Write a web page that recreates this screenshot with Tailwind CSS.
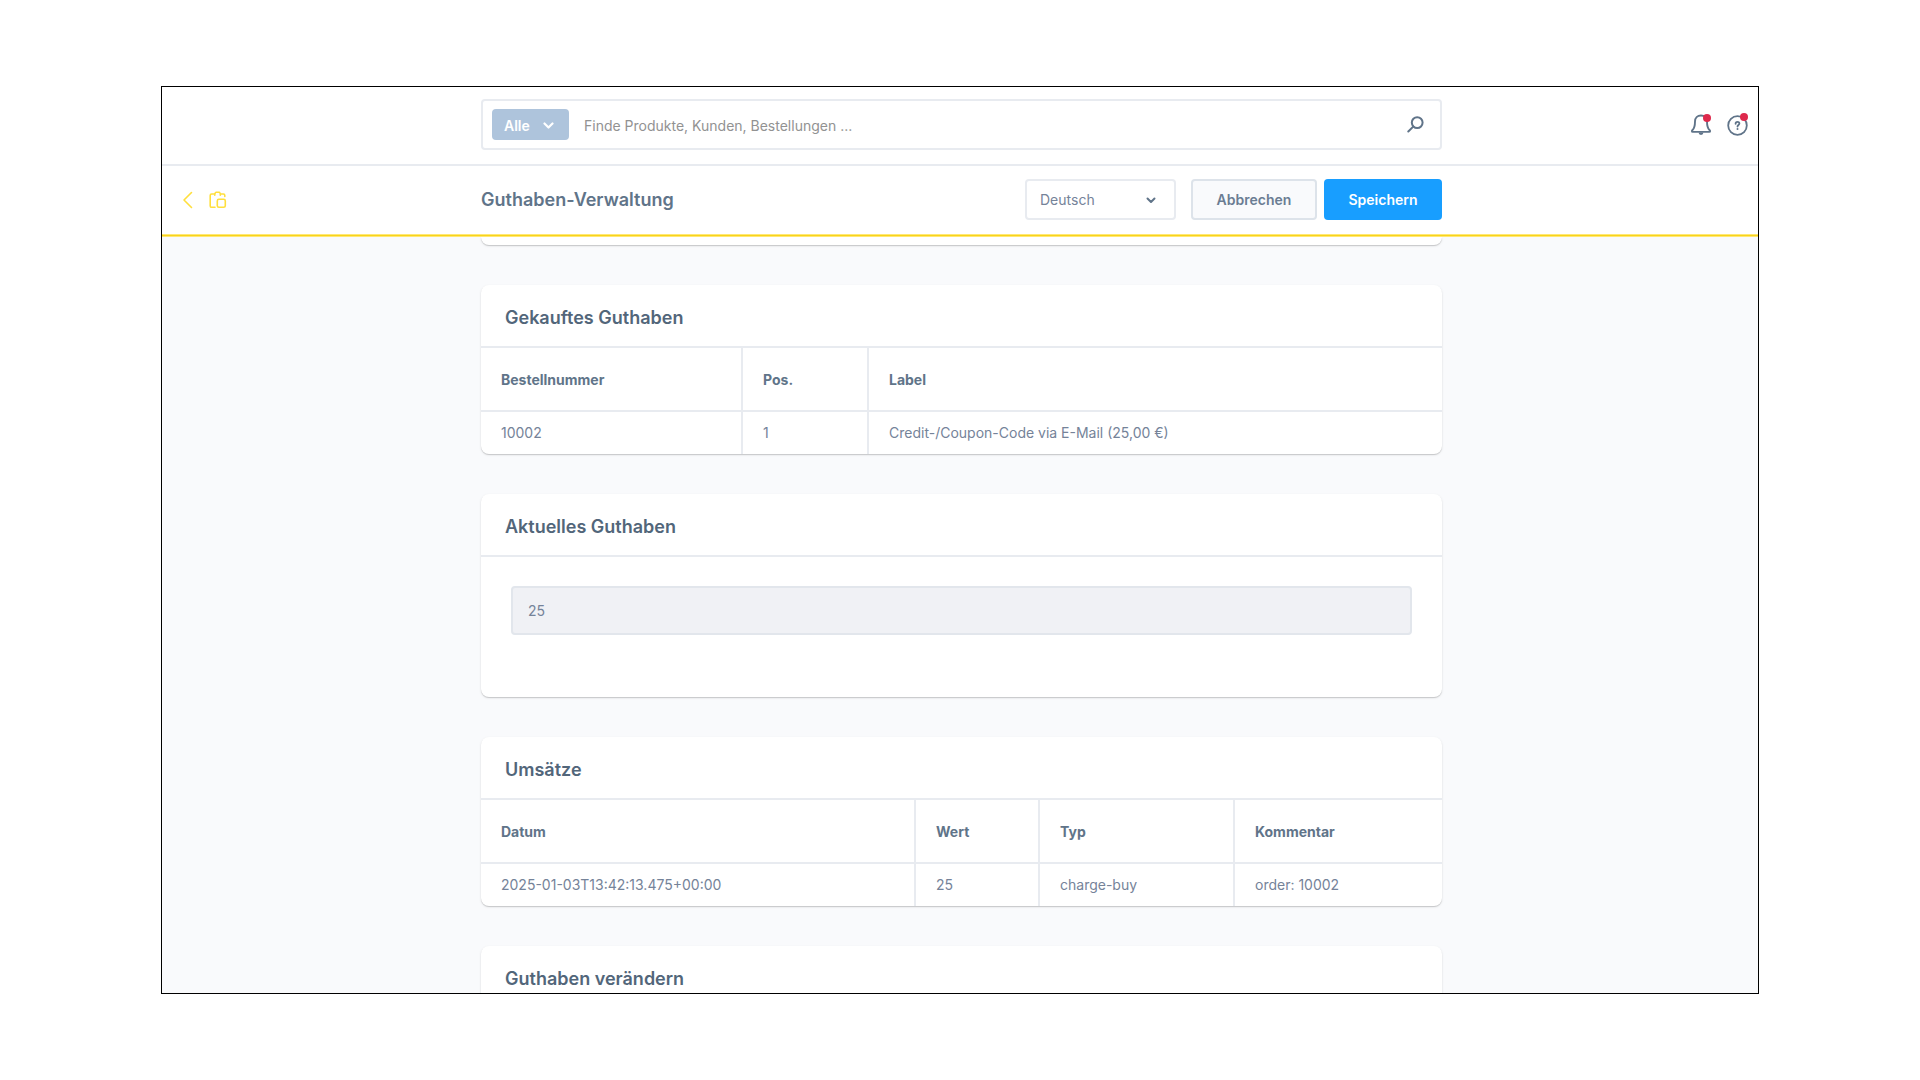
<!DOCTYPE html>
<html lang="de">
<head>
<meta charset="utf-8">
<title>Guthaben-Verwaltung</title>
<script src="https://cdn.jsdelivr.net/npm/@tailwindcss/browser@4"></script>
</head>
<body class="bg-white font-['Inter',sans-serif] text-[14px] text-[#758399]">
<div class="flex h-screen px-[161px] py-[86px]">
<div class="flex min-w-0 flex-1 flex-col overflow-hidden border border-black bg-[#f9fafc]">

  <header class="grid shrink-0 grid-cols-[319fr_961fr_316fr] border-b-2 border-[#e8ebf0] bg-white pt-3 pb-[14px]">
    <form class="col-start-2 flex h-[51px] items-center rounded-[4px] border-2 border-[#e8ebf0] pr-4 pl-[9px]">
      <button type="button" class="flex h-[31px] w-[77px] items-center justify-between rounded-[4px] bg-[#aec4dc] pt-px pr-[15px] pl-3 font-semibold text-white">
        Alle
        <svg class="h-[7px] w-[11px]" viewBox="0 0 11 7" fill="none" stroke="currentColor" stroke-width="2.2" stroke-linecap="round" stroke-linejoin="round"><path d="M1.500 1.500l4 4 4-4"/></svg>
      </button>
      <input type="search" aria-label="Suche" placeholder="Finde Produkte, Kunden, Bestellungen ..." class="ml-[15px] h-full min-w-0 flex-1 pt-[2px] outline-none placeholder:text-[#929292]">
      <button type="submit" aria-label="Suchen" class="text-[#607489]">
        <svg class="h-[17px] w-[17px]" viewBox="0 0 17 17" fill="none" stroke="currentColor" stroke-width="2" stroke-linecap="round"><circle cx="10.200" cy="6.600" r="5.400"/><path d="M6.200 10.600L1.300 15.500"/></svg>
      </button>
    </form>
    <div class="flex items-center justify-end gap-3 pr-[9px] text-[#607489]">
      <button type="button" aria-label="Benachrichtigungen" class="relative">
        <svg class="h-6 w-6" viewBox="0 0 24 24" fill="none" stroke="currentColor" stroke-width="1.900" stroke-linejoin="round"><path d="M12 2.500c-3.600 0-6 2.500-6 5.900 0 4.700-.6 6.800-2.500 8.600-.8.8-.9 1.900.2 1.900h16.600c1.100 0 1-1.100.2-1.900-1.900-1.800-2.500-3.900-2.500-8.600 0-3.400-2.400-5.900-6-5.900z"/><path d="M9.600 19.500a2.400 2.400 0 0 0 4.800 0z" fill="currentColor" stroke="none"/></svg>
        <span class="absolute top-px right-0.5 h-2 w-2 rounded-full bg-[#de294c]"></span>
      </button>
      <button type="button" aria-label="Hilfe" class="relative">
        <svg class="h-6 w-6" viewBox="0 0 24 24" fill="none" stroke="currentColor" stroke-width="1.800"><circle cx="12.500" cy="12.500" r="9.300"/><path d="M10.600 10.800c0-1.200.8-1.900 1.900-1.900s1.900.7 1.900 1.700c0 1.400-1.900 1.400-1.900 3" stroke-linecap="round"/><circle cx="12.500" cy="15.900" r="1" fill="currentColor" stroke="none"/></svg>
        <span class="absolute top-0 right-px h-2 w-2 rounded-full bg-[#de294c]"></span>
      </button>
    </div>
  </header>

  <div class="grid h-[68px] shrink-0 grid-cols-[319fr_961fr_316fr] items-center bg-white pb-px">
    <nav class="flex items-center gap-[15px] pl-5 text-[#ffdf3d]">
      <a href="#" aria-label="Zurück"><svg class="h-[18px] w-3" viewBox="0 0 12 18" fill="none" stroke="currentColor" stroke-width="1.600" stroke-linecap="round" stroke-linejoin="round"><path d="M9.500 1.500L2 9l7.500 7.500"/></svg></a>
      <a href="#" aria-label="Modul"><svg class="h-[18px] w-[18px]" viewBox="0 0 18 18" fill="none" stroke="currentColor" stroke-width="1.600" stroke-linecap="round" stroke-linejoin="round"><path d="M6 16.300H2.800C1.700 16.300 1.200 15.800 1.200 14.900V4.400C1.200 3.500 1.700 3 2.600 3H5.500C6 3 6.100 1.300 7 1.300h3.200C11 1.300 11.100 3 11.700 3h2.700c.9 0 1.400.5 1.400 1.400V5.500M5.800 4.300V3M11.300 4.300V3"/><rect x="8.300" y="8.300" width="8" height="8" rx="1.600"/></svg></a>
    </nav>
    <div class="flex items-center">
      <h1 class="flex-1 text-[18px] font-semibold text-[#607489]">Guthaben-Verwaltung</h1>
      <div class="relative">
        <select aria-label="Sprache" class="h-[41px] w-[151px] appearance-none rounded-[4px] border-2 border-[#e8ebf0] bg-white pl-[13px]"><option>Deutsch</option></select>
        <svg class="pointer-events-none absolute top-[18px] right-5 h-[7px] w-[10px] text-[#607489]" viewBox="0 0 10 7" fill="none" stroke="currentColor" stroke-width="2" stroke-linecap="round" stroke-linejoin="round"><path d="M1.500 1.500L5 5l3.500-3.500"/></svg>
      </div>
      <button type="button" class="ml-[15px] h-[41px] w-[126px] rounded-[4px] border-2 border-[#dde3ea] bg-[#f9fafc] font-semibold text-[#6b7d93]">Abbrechen</button>
      <button type="button" class="ml-[7px] h-[41px] w-[118px] rounded-[4px] bg-[#189eff] font-semibold text-white">Speichern</button>
    </div>
  </div>
  <div class="h-[3px] shrink-0 border-y border-[#ffe873] bg-[#f8d31c]"></div>

  <main class="grid min-h-0 flex-1 grid-cols-[319fr_961fr_316fr] overflow-hidden">
    <div class="col-start-2 flex flex-col gap-10">
      <section class="h-2 shrink-0 rounded-b-[8px] bg-white shadow-[0_1px_1px_rgba(0,0,0,0.16),0_1px_3px_rgba(0,0,0,0.08)]"></section>

      <section class="shrink-0 rounded-[8px] bg-white shadow-[0_1px_1px_rgba(0,0,0,0.16),0_1px_3px_rgba(0,0,0,0.08)]">
        <h2 class="flex h-[63px] items-center border-b-2 border-[#e8ebf0] px-6 pt-[3px] text-[18px] font-semibold text-[#52667a]">Gekauftes Guthaben</h2>
        <table class="w-full table-fixed text-left">
          <colgroup><col class="w-[261px]"><col class="w-[126px]"><col></colgroup>
          <thead><tr class="h-[63px] border-b-2 border-[#e8ebf0] text-[#607489]">
            <th class="border-r-2 border-[#e8ebf0] px-5 pt-px font-bold">Bestellnummer</th><th class="border-r-2 border-[#e8ebf0] px-5 pt-px font-bold">Pos.</th><th class="px-5 pt-px font-bold">Label</th></tr></thead>
          <tbody><tr class="h-[43px]">
            <td class="border-r-2 border-[#e8ebf0] px-5 pb-[2px]">10002</td><td class="border-r-2 border-[#e8ebf0] px-5 pb-[2px]">1</td><td class="px-5 pb-[2px]">Credit-/Coupon-Code via E-Mail (25,00 €)</td></tr></tbody>
        </table>
      </section>

      <section class="shrink-0 rounded-[8px] bg-white shadow-[0_1px_1px_rgba(0,0,0,0.16),0_1px_3px_rgba(0,0,0,0.08)]">
        <h2 class="flex h-[63px] items-center border-b-2 border-[#e8ebf0] px-6 pt-[3px] text-[18px] font-semibold text-[#52667a]">Aktuelles Guthaben</h2>
        <div class="h-[140px] px-[30px] pt-[29px]">
          <input type="text" aria-label="Aktuelles Guthaben" value="25" disabled class="block h-[49px] w-full rounded-[4px] border-2 border-[#e2e6ec] bg-[#f0f1f5] px-[15px]">
        </div>
      </section>

      <section class="shrink-0 rounded-[8px] bg-white shadow-[0_1px_1px_rgba(0,0,0,0.16),0_1px_3px_rgba(0,0,0,0.08)]">
        <h2 class="flex h-[63px] items-center border-b-2 border-[#e8ebf0] px-6 pt-[3px] text-[18px] font-semibold text-[#52667a]">Umsätze</h2>
        <table class="w-full table-fixed text-left">
          <colgroup><col class="w-[434px]"><col class="w-[124px]"><col class="w-[195px]"><col></colgroup>
          <thead><tr class="h-[63px] border-b-2 border-[#e8ebf0] text-[#607489]">
            <th class="border-r-2 border-[#e8ebf0] px-5 pt-px font-bold">Datum</th><th class="border-r-2 border-[#e8ebf0] px-5 pt-px font-bold">Wert</th><th class="border-r-2 border-[#e8ebf0] px-5 pt-px font-bold">Typ</th><th class="px-5 pt-px font-bold">Kommentar</th></tr></thead>
          <tbody><tr class="h-[43px]">
            <td class="border-r-2 border-[#e8ebf0] px-5 pb-[2px]">2025-01-03T13:42:13.475+00:00</td><td class="border-r-2 border-[#e8ebf0] px-5 pb-[2px]">25</td><td class="border-r-2 border-[#e8ebf0] px-5 pb-[2px]">charge-buy</td><td class="px-5 pb-[2px]">order: 10002</td></tr></tbody>
        </table>
      </section>

      <section class="shrink-0 rounded-[8px] bg-white shadow-[0_1px_1px_rgba(0,0,0,0.16),0_1px_3px_rgba(0,0,0,0.08)]">
        <h2 class="flex h-[63px] items-center border-b-2 border-[#e8ebf0] px-6 pt-[3px] text-[18px] font-semibold text-[#52667a]">Guthaben verändern</h2>
      </section>
    </div>
  </main>
</div>
</div>
</body>
</html>
